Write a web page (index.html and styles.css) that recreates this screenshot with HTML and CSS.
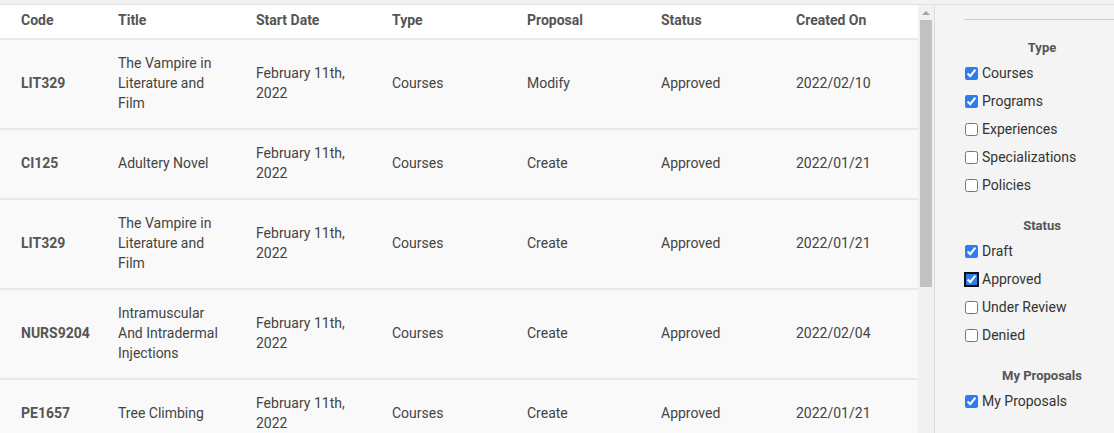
FILE: index.html
```html
<!DOCTYPE html>
<html lang="en">
<head>
<meta charset="utf-8">
<title>Proposals</title>
<link rel="stylesheet" href="styles.css">
</head>
<body>
<div class="app">
  <div class="topband"></div>
  <div class="main">
    <div class="table-wrap">
      <table class="grid">
        <colgroup>
          <col class="c-code"><col class="c-title"><col class="c-date"><col class="c-type"><col class="c-prop"><col class="c-status"><col class="c-created">
        </colgroup>
        <thead>
          <tr><th>Code</th><th>Title</th><th>Start Date</th><th>Type</th><th>Proposal</th><th>Status</th><th>Created On</th></tr>
        </thead>
        <tbody>
          <tr><td class="code">LIT329</td><td>The Vampire in Literature and Film</td><td>February 11th, 2022</td><td>Courses</td><td>Modify</td><td>Approved</td><td>2022/02/10</td></tr>
          <tr><td class="code">CI125</td><td>Adultery Novel</td><td>February 11th, 2022</td><td>Courses</td><td>Create</td><td>Approved</td><td>2022/01/21</td></tr>
          <tr><td class="code">LIT329</td><td>The Vampire in Literature and Film</td><td>February 11th, 2022</td><td>Courses</td><td>Create</td><td>Approved</td><td>2022/01/21</td></tr>
          <tr><td class="code">NURS9204</td><td>Intramuscular And Intradermal Injections</td><td>February 11th, 2022</td><td>Courses</td><td>Create</td><td>Approved</td><td>2022/02/04</td></tr>
          <tr><td class="code">PE1657</td><td>Tree Climbing</td><td>February 11th, 2022</td><td>Courses</td><td>Create</td><td>Approved</td><td>2022/01/21</td></tr>
        </tbody>
      </table>
    </div>
    <div class="scrollbar">
      <div class="sb-arrow"></div>
      <div class="sb-thumb"></div>
    </div>
    <aside class="sidebar">
      <div class="filters">
        <div class="group first">
          <div class="group-title">Type</div>
          <label class="opt"><input type="checkbox" checked>Courses</label>
          <label class="opt"><input type="checkbox" checked>Programs</label>
          <label class="opt"><input type="checkbox">Experiences</label>
          <label class="opt"><input type="checkbox">Specializations</label>
          <label class="opt"><input type="checkbox">Policies</label>
        </div>
        <div class="group">
          <div class="group-title">Status</div>
          <label class="opt"><input type="checkbox" checked>Draft</label>
          <label class="opt"><input type="checkbox" class="focused" checked>Approved</label>
          <label class="opt"><input type="checkbox">Under Review</label>
          <label class="opt"><input type="checkbox">Denied</label>
        </div>
        <div class="group">
          <div class="group-title">My Proposals</div>
          <label class="opt"><input type="checkbox" checked>My Proposals</label>
        </div>
      </div>
    </aside>
  </div>
</div>
</body>
</html>
```
FILE: styles.css
```css
html, body {
  margin: 0;
  padding: 0;
  height: 433px;
  overflow: hidden;
  background: #f4f4f4;
  font-family: Roboto, "Liberation Sans", Arial, sans-serif;
  font-size: 14px;
  color: #444;
}
.app {
  display: flex;
  flex-direction: column;
  height: 433px;
}
.topband {
  height: 4px;
  background: #f2f2f2;
  border-bottom: 1px solid #e2e2e2;
  flex: none;
}
.main {
  display: flex;
  flex: 1;
  min-height: 0;
}
.table-wrap {
  width: 918px;
  flex: none;
  overflow: hidden;
  background: #f9f9f9;
}
.grid {
  width: 918px;
  table-layout: fixed;
  border-collapse: separate;
  border-spacing: 0;
}
.c-code { width: 97px; }
.c-title { width: 138px; }
.c-date { width: 136px; }
.c-type { width: 135px; }
.c-prop { width: 134px; }
.c-status { width: 135px; }
.c-created { width: 143px; }
.grid th {
  background: #fff;
  text-align: left;
  font-weight: 700;
  color: #555;
  line-height: 20px;
  padding: 5px 10px 8px 21px;
  border-bottom: 2px solid #e8e8e8;
}
.grid td {
  line-height: 20px;
  padding: 13px 10px 15px 21px;
  vertical-align: middle;
  border-bottom: 2px solid #e8e8e8;
  color: #444;
}
.grid td.code {
  font-weight: 700;
  color: #555;
}
.scrollbar {
  width: 16px;
  flex: none;
  background: #f1f1f1;
  display: flex;
  flex-direction: column;
}
.sb-arrow {
  height: 15px;
  display: flex;
  align-items: center;
  justify-content: center;
}
.sb-arrow::before {
  content: "";
  width: 0;
  height: 0;
  border-left: 4px solid transparent;
  border-right: 4px solid transparent;
  border-bottom: 4px solid #a3a3a3;
}
.sb-thumb {
  height: 267px;
  margin-left: 2px;
  width: 12px;
  background: #c1c1c1;
}
.sidebar {
  flex: 1;
  border-left: 1px solid #dcdcdc;
  background: #f4f4f4;
  padding-left: 29px;
  overflow: hidden;
}
.filters {
  width: 156px;
  margin-top: 14px;
  border-top: 1px solid #cfcfcf;
}
.group {
  display: flex;
  flex-direction: column;
}
.group-title {
  text-align: center;
  font-size: 13px;
  font-weight: 700;
  line-height: 16px;
  color: #555;
  margin-top: 19px;
  margin-bottom: 3px;
}
.group.first .group-title {
  margin-top: 20px;
}
.opt {
  display: flex;
  align-items: center;
  height: 28px;
  color: #333;
  font-size: 14px;
  white-space: nowrap;
}
.opt input {
  width: 13px;
  height: 13px;
  margin: 0 4px 0 1px;
  accent-color: #2f7cf0;
}
.opt input.focused {
  outline: 2px solid #111;
  outline-offset: -1px;
  border-radius: 2px;
}
```
